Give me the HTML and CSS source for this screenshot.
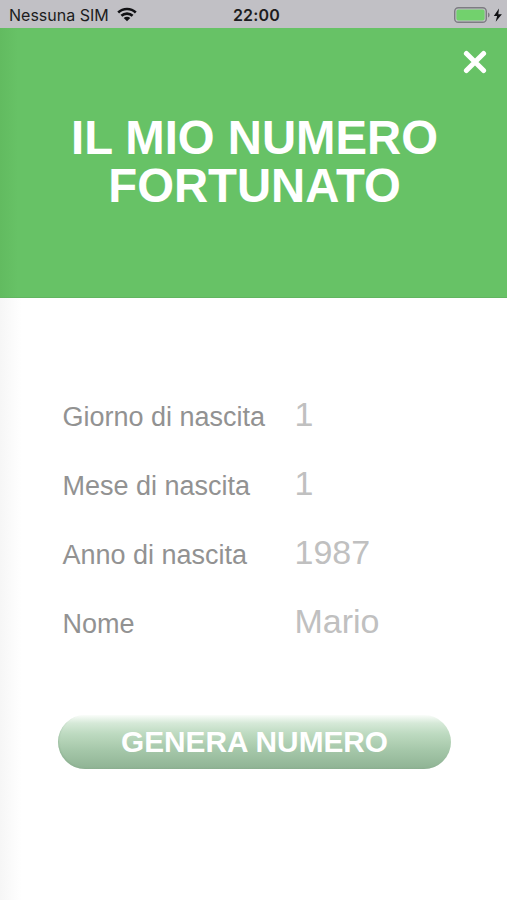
FILE: index.html
```html
<!DOCTYPE html>
<html lang="it">
<head>
<meta charset="utf-8">
<title>Il mio numero fortunato</title>
<link rel="stylesheet" href="styles.css">
</head>
<body>
<div class="status">
  <div class="carrier">
    <span>Nessuna SIM</span>
    <svg class="wifi" width="20" height="15" viewBox="0 0 20 15">
      <path d="M1.2 5.5C6.1.9 13.9.9 18.8 5.5M4.4 8.8c3.1-2.9 8.1-2.9 11.2 0" fill="none" stroke="#111114" stroke-width="2.6"/>
      <path d="M6.7 10.9c1.9-1.7 4.7-1.7 6.6 0L10 14.3z" fill="#111114"/>
    </svg>
  </div>
  <div class="clock">22:00</div>
  <div class="power">
    <svg width="49" height="18" viewBox="0 0 49 18">
      <rect x=".7" y="1.7" width="31.6" height="14.6" rx="3.6" fill="none" stroke="#7d7c82" stroke-width="1.4"/>
      <rect x="2.4" y="3.4" width="28.2" height="11.2" rx="2" fill="#72d16d"/>
      <path d="M34 6.5c2.2.8 2.2 4.2 0 5z" fill="#7d7c82"/>
      <path d="M45 2.5 39.8 10h3.3l-1.4 5.8 6.2-7.6h-3.6z" fill="#111114"/>
    </svg>
  </div>
</div>
<main class="screen">
  <header class="hero">
    <div class="close-row">
      <svg class="close" width="24" height="24" viewBox="0 0 24 24">
        <path d="M3.4 3.4 20.6 20.6M20.6 3.4 3.4 20.6" stroke="#fff" stroke-width="5" stroke-linecap="round"/>
      </svg>
    </div>
    <h1>IL MIO NUMERO<br>FORTUNATO</h1>
  </header>
  <form class="form">
    <div class="row"><span class="label">Giorno di nascita</span><span class="value">1</span></div>
    <div class="row"><span class="label">Mese di nascita</span><span class="value">1</span></div>
    <div class="row"><span class="label">Anno di nascita</span><span class="value">1987</span></div>
    <div class="row"><span class="label">Nome</span><span class="value">Mario</span></div>
    <button class="submit" type="button">GENERA NUMERO</button>
  </form>
</main>
</body>
</html>
```
FILE: styles.css
```css
* { box-sizing: border-box; }

body {
  margin: 0;
  height: 900px;
  overflow: hidden;
  background: #fff;
  font-family: "Liberation Sans", Arial, sans-serif;
}

.status {
  display: grid;
  grid-template-columns: 1fr auto 1fr;
  align-items: center;
  height: 28px;
  padding: 1px 4px 0 9px;
  background: #c1c0c5;
  color: #1c1c20;
  font: 400 16px/20px Inter, sans-serif;
}

.carrier { display: flex; align-items: center; gap: 8px; }
.clock { font-weight: 600; letter-spacing: 0.2px; padding-left: 1px; }
.power { display: flex; justify-content: flex-end; }

.screen {
  height: 872px;
  background: linear-gradient(90deg, #f6f6f6 0, #fff 22px);
}

.hero {
  height: 270px;
  background: linear-gradient(90deg, #62bb60 0, #67c266 18px);
  border-bottom: 1px solid #62b561;
}

.close-row {
  display: flex;
  justify-content: flex-end;
  padding: 22px 20px 0 0;
}

h1 {
  margin: 40px 0 0;
  padding-left: 2px;
  color: #fff;
  font-size: 47.3px;
  line-height: 47.5px;
  text-align: center;
  white-space: nowrap;
}

.form { padding: 82px 56px 0 58px; }

.row {
  display: grid;
  grid-template-columns: 232px 1fr;
  align-items: baseline;
  height: 69px;
  padding-left: 4.5px;
  line-height: 69px;
}

.label { color: #929292; font-size: 27px; }
.value { color: #c0c0c0; font-size: 34px; }

.submit {
  display: block;
  width: 100%;
  height: 54px;
  margin-top: 59px;
  padding: 0;
  border: 0;
  border-radius: 27px;
  background: linear-gradient(#fafdfa 0, #d6e9d8 15%, #bddac0 35%, #a5c7a9 65%, #8fb394 100%);
  box-shadow: inset 1px -1px 1px #88aa8c66;
  color: #fff;
  font: 700 29.8px/54px "Liberation Sans", Arial, sans-serif;
}
```
